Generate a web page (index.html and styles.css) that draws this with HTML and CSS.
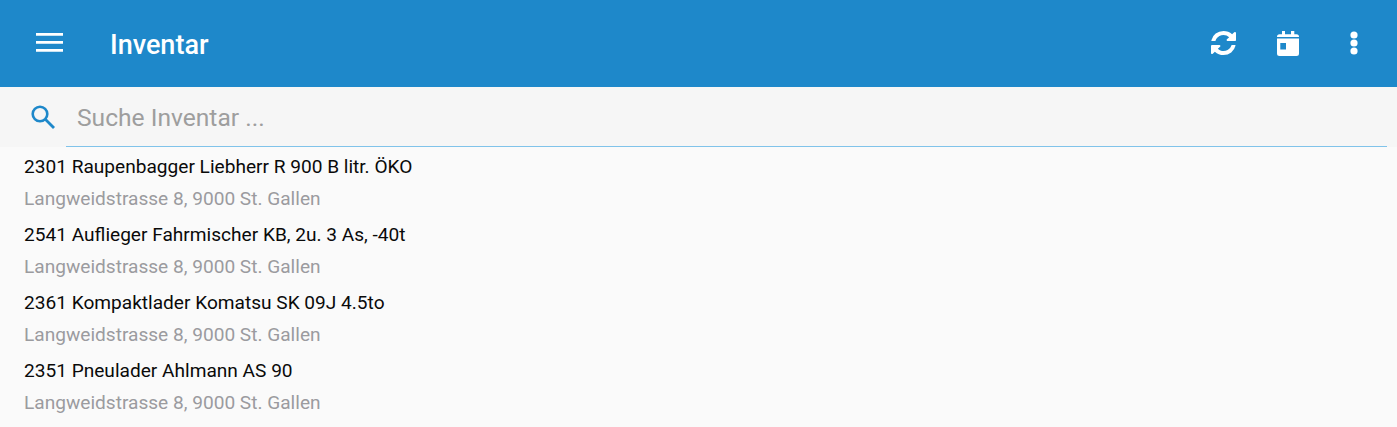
FILE: index.html
```html
<!DOCTYPE html>
<html>
  <head>
    <title>Inventar</title>
    <meta charset="utf-8" />
    <link rel="stylesheet" href="styles.css">
  </head>
  <body>
    <header class="topbar">
      <button class="icon-btn menu-btn">
        <svg width="27" height="22" viewBox="0 0 27 22"><path d="M0 1h27v2.700H0zM0 9h27v2.700H0zM0 17h27v2.700H0z" fill="#fff"/></svg>
      </button>
      <h1 class="title">Inventar</h1>
      <div class="actions">
        <button class="icon-btn refresh-btn">
          <svg width="25" height="24" viewBox="0 0 1536 1536" preserveAspectRatio="none"><path fill="#fff" d="M1511 928q0 5-1 7-64 268-268 434.500T764 1536q-146 0-282.500-55T238 1324l-129 129q-19 19-45 19t-45-19-19-45V960q0-26 19-45t45-19h448q26 0 45 19t19 45-19 45l-137 137q71 66 161 102t187 36q134 0 250-65t186-179q11-17 53-117 8-23 30-23h192q13 0 22.500 9.500t9.500 22.500zm25-800v448q0 26-19 45t-45 19h-448q-26 0-45-19t-19-45 19-45l138-138Q969 256 768 256q-134 0-250 65T332 500q-11 17-53 117-8 23-30 23H50q-13 0-22.500-9.500T18 608v-7q65-268 270-434.500T768 0q146 0 284 55.500T1297 212l130-129q19-19 45-19t45 19 19 45z"/></svg>
        </button>
        <button class="icon-btn">
          <svg width="22" height="25" viewBox="0 0 22 25"><path fill="#fff" fill-rule="evenodd" d="M5 0h3v3.300h6V0h3.300v3.300h2.200A2.500 2.500 0 0 1 22 5.800V6H0v-.2a2.500 2.500 0 0 1 2.500-2.500H5zM0 7.500h22v15a2.500 2.500 0 0 1-2.500 2.500h-17A2.500 2.500 0 0 1 0 22.500zM3.300 12v6.600H9V12z"/></svg>
        </button>
        <button class="icon-btn">
          <svg width="8" height="24" viewBox="0 0 8 24"><circle cx="4" cy="4" r="3.600" fill="#fff"/><circle cx="4" cy="12" r="3.600" fill="#fff"/><circle cx="4" cy="20" r="3.600" fill="#fff"/></svg>
        </button>
      </div>
    </header>

    <div class="searchbar">
      <span class="search-icon">
        <svg width="24" height="24" viewBox="0 0 24 24"><circle cx="9" cy="9" r="7.300" fill="none" stroke="#1e88ca" stroke-width="2.600"/><path d="M14.300 14.300L23 23" fill="none" stroke="#1e88ca" stroke-width="2.800"/></svg>
      </span>
      <div class="search-field">Suche Inventar ...</div>
    </div>

    <ul class="list">
      <li class="item">
        <div class="item-name">2301 Raupenbagger Liebherr R 900 B litr. ÖKO</div>
        <div class="item-addr">Langweidstrasse 8, 9000 St. Gallen</div>
      </li>
      <li class="item">
        <div class="item-name">2541 Auflieger Fahrmischer KB, 2u. 3 As, -40t</div>
        <div class="item-addr">Langweidstrasse 8, 9000 St. Gallen</div>
      </li>
      <li class="item">
        <div class="item-name">2361 Kompaktlader Komatsu SK 09J 4.5to</div>
        <div class="item-addr">Langweidstrasse 8, 9000 St. Gallen</div>
      </li>
      <li class="item">
        <div class="item-name">2351 Pneulader Ahlmann AS 90</div>
        <div class="item-addr">Langweidstrasse 8, 9000 St. Gallen</div>
      </li>
    </ul>
  </body>
</html>
```

FILE: styles.css
```css
html,
body {
  height: 100%;
  overflow: hidden;
}

body {
  margin: 0;
  background: #fafafa;
  font-family: Roboto, sans-serif;
}

.topbar {
  display: flex;
  align-items: center;
  height: 87px;
  background: #1e88ca;
  color: #fff;
}

.icon-btn {
  display: flex;
  align-items: center;
  justify-content: center;
  width: 66px;
  height: 86px;
  margin-bottom: 1px;
  padding: 0;
  border: 0;
  background: none;
}

.menu-btn {
  width: 27px;
  margin: 0 47px 1px 36px;
}

.refresh-btn {
  padding-left: 2px;
}

.title {
  margin: 2px 0 0;
  font-size: 27px;
  font-weight: 500;
}

.actions {
  display: flex;
  margin-left: auto;
  margin-right: 10px;
}

.searchbar {
  display: flex;
  height: 60px;
  background: #f6f6f6;
}

.search-icon {
  display: flex;
  align-items: center;
  width: 66px;
  padding-left: 31px;
  box-sizing: border-box;
}

.search-field {
  flex: 1;
  margin-right: 10px;
  padding-left: 11px;
  border-bottom: 1px solid #80c3ea;
  color: #9e9e9e;
  font-size: 24.6px;
  line-height: 61px;
}

.list {
  margin: 0;
  padding: 0;
  list-style: none;
}

.item {
  height: 68px;
  padding-left: 24px;
}

.item-name {
  padding-top: 4px;
  color: #0a0a0a;
  font-size: 19.1px;
  line-height: 31px;
}

.item-addr {
  color: #9b9b9f;
  font-size: 19.1px;
  line-height: 33px;
}
```
